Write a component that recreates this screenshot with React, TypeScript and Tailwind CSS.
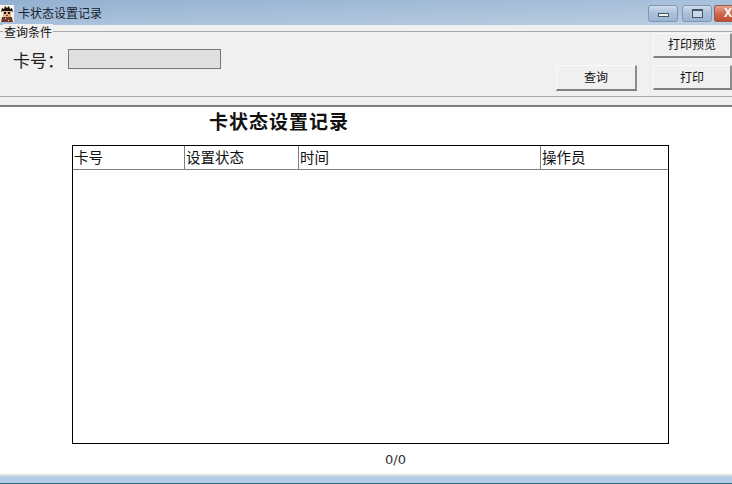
import React from 'react';

const cjk = "font-['Noto_Sans_CJK_SC','Liberation_Sans',sans-serif]";

const columns = [
  { name: '卡号', width: 'w-[112px]' },
  { name: '设置状态', width: 'w-[114px]' },
  { name: '时间', width: 'w-[242px]' },
  { name: '操作员', width: 'flex-1' },
];

const ToolButton = ({ label, size, lift }: { label: string; size: string; lift: string }) => (
  <button
    className={`${size} ${lift} bg-[#f0f0f0] border-t border-l border-t-[#fafafa] border-l-[#fafafa] border-r-2 border-b-2 border-r-[#8c8c8c] border-b-[#808080] text-[12px] leading-none text-[#111] flex items-center justify-center`}
  >
    {label}
  </button>
);

const WindowButton = ({ children }: { children: React.ReactNode }) => (
  <div className="w-[30px] h-[17px] rounded-[3px] border border-[#7e96b0] bg-gradient-to-b from-[#cfdbe9] via-[#a9c0d9] to-[#9bb5d0] flex items-center justify-center">
    {children}
  </div>
);

export default function App() {
  return (
    <div className={`w-[732px] h-[484px] overflow-hidden flex flex-col bg-white ${cjk}`}>
      {/* title bar */}
      <div className="h-[25px] shrink-0 flex items-center bg-gradient-to-br from-[#92b0d1] via-[#a8c0da] to-[#bccee1]">
        <svg width="14" height="17" viewBox="0 0 14 17" className="shrink-0 mt-[1px]">
          <rect width="14" height="17" fill="#fdf6e6" />
          <path d="M1 7 L2 3 L4 4 L5 1 L7 3 L9 1 L10 4 L12 3 L13 7 L11 6 L3 6 Z" fill="#1c1410" />
          <rect x="3" y="6" width="8" height="6" fill="#e8b088" />
          <rect x="4" y="7" width="2" height="2" fill="#1c1410" />
          <rect x="8" y="7" width="2" height="2" fill="#1c1410" />
          <rect x="6" y="10" width="2" height="1" fill="#8c3a28" />
          <path d="M1 17 L2 12 L12 12 L13 17 Z" fill="#6e3a28" />
          <rect x="5" y="13" width="1" height="1" fill="#f4e4c8" />
          <rect x="8" y="15" width="1" height="1" fill="#f4e4c8" />
        </svg>
        <span className="ml-[4px] text-[12px] leading-none text-[#16202c]">卡状态设置记录</span>
        <div className="ml-auto flex items-center pt-[2px]">
          <WindowButton>
            <div className="w-[11px] h-[4px] mt-[3px] bg-[#eef2f7] border border-[#46566a]" />
          </WindowButton>
          <div className="ml-[4px]">
            <WindowButton>
              <div className="w-[11px] h-[9px] bg-[#c8d6e6] border border-[#46566a] border-t-2" />
            </WindowButton>
          </div>
          <div className="ml-[2px] w-[18px] h-[17px] rounded-l-[3px] border border-r-0 border-[#9a5a4c] bg-gradient-to-b from-[#e3a48e] via-[#cf6a50] to-[#c04a30] pl-[9px] text-[12px] leading-[15px] font-bold text-white overflow-hidden font-['Liberation_Sans',sans-serif]">
            X
          </div>
        </div>
      </div>

      {/* query panel */}
      <div className="h-[80px] shrink-0 bg-[#f0f0f0]">
        <div className="h-[66px] mt-[6px] border-t border-b border-[#a8a8a8] flex flex-col relative">
          <span className="absolute left-[3px] -top-[8px] bg-[#f0f0f0] px-[1px] text-[12px] leading-[15px] text-[#111]">查询条件</span>
          <div className="flex justify-end mt-[1px]">
            <ToolButton label="打印预览" size="w-[79px] h-[25px]" lift="pb-[2px]" />
          </div>
          <div className="flex flex-1">
            <div className="flex items-start pl-[13px] -mt-[9px]">
              <span className="w-[55px] text-[17px] leading-[21px] text-[#222]">卡号：</span>
              <div className="w-[153px] h-[20px] bg-[#e0e0e0] border border-[#777]" />
            </div>
            <div className="ml-auto flex items-start gap-[16px] mt-[7px]">
              <ToolButton label="查询" size="w-[81px] h-[26px]" lift="pb-[2px]" />
              <ToolButton label="打印" size="w-[79px] h-[25px]" lift="pb-0" />
            </div>
          </div>
        </div>
      </div>
      <div className="h-[2px] shrink-0 bg-[#7d7d7d]" />

      {/* report */}
      <div className="flex-1 flex flex-col pl-[72px] pr-[63px]">
        <div className="h-[38px] shrink-0 pl-[137px] pt-[2px] text-[19px] leading-[24px] tracking-[1px] font-bold text-[#111] whitespace-nowrap">
          卡状态设置记录
        </div>
        <div className="h-[299px] shrink-0 border border-black flex flex-col">
          <div className="h-[24px] shrink-0 flex border-b border-[#808080]">
            {columns.map((col, i) => (
              <div
                key={col.name}
                className={`${col.width} ${i < columns.length - 1 ? 'border-r border-[#808080]' : ''} pl-[1px] text-[14.5px] leading-[21px] text-[#111] whitespace-nowrap`}
              >
                {col.name}
              </div>
            ))}
          </div>
        </div>
        <div className="pl-[313px] pt-[8px] text-[13px] leading-[16px] text-[#333] font-['DejaVu_Sans',sans-serif]">0/0</div>
      </div>

      {/* bottom edge */}
      <div className="h-[2px] shrink-0 bg-[#e2e2e2]" />
      <div className="h-[7px] shrink-0 bg-[#b4cee8]" />
      <div className="h-[1px] shrink-0 bg-[#2f6f7f]" />
    </div>
  );
}
